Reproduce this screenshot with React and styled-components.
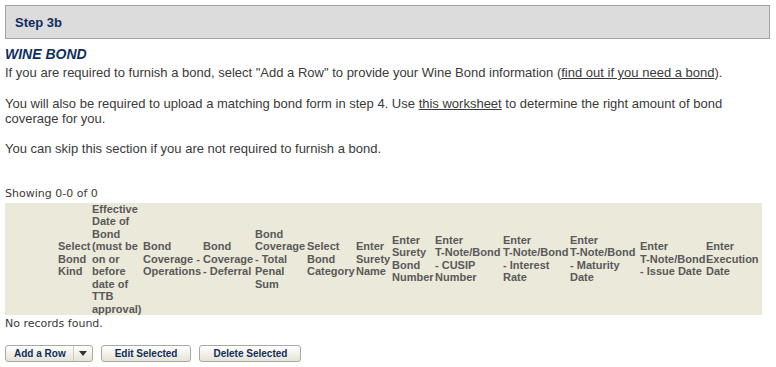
import React from "react";
import styled, { createGlobalStyle } from "styled-components";

const GlobalStyle = createGlobalStyle`
  html, body {
    margin: 0;
    padding: 0;
    background: #ffffff;
  }
  body {
    font-family: "Liberation Sans", Arial, sans-serif;
    color: #333333;
  }
`;

const Page = styled.div`
  padding: 5px 6px 0 5px;
`;

const StepHeader = styled.div`
  box-sizing: border-box;
  height: 34px;
  border: 1px solid #a3a3a3;
  background: #dcdcdc;
  padding: 0 9px;
  display: flex;
  align-items: center;
  font: bold 13px "Liberation Sans", Arial, sans-serif;
  color: #0f2d5c;
`;

const Section = styled.section`
  margin-top: 7px;
`;

const SectionTitle = styled.h2`
  margin: 0 0 3px;
  font: italic bold 14px "Liberation Sans", Arial, sans-serif;
  color: #0f305f;
`;

const Text = styled.p`
  margin: 0 0 ${(p) => p.$mb ?? 16}px;
  font-size: 13px;
  color: #3a3a3a;
`;

const Link = styled.a`
  color: inherit;
  text-decoration: underline;
`;

const Status = styled.div`
  font-family: "DejaVu Sans", Verdana, sans-serif;
  font-size: 11px;
  color: #3a3a3a;
  margin-top: ${(p) => p.$mt ?? 0}px;
`;

const Grid = styled.table`
  width: 757px;
  table-layout: fixed;
  border-collapse: collapse;
  margin-top: 3px;
`;

const HeadRow = styled.tr`
  background: #ebe9d9;
`;

const HeadCell = styled.th`
  box-sizing: border-box;
  width: ${(p) => p.$w}px;
  padding: 0 1px;
  font: bold 11px "Liberation Sans", Arial, sans-serif;
  line-height: 12.5px;
  color: #595959;
  text-align: left;
  vertical-align: middle;
`;

const NoBreak = styled.span`
  white-space: nowrap;
`;

const ButtonBar = styled.div`
  display: flex;
  gap: 8px;
  margin-top: 14.5px;
`;

const buttonFace = `
  box-sizing: border-box;
  height: 17px;
  border: 1px solid #a8a8a8;
  border-radius: 3px;
  background: linear-gradient(#ffffff, #e6e3d4);
  font: bold 10px "Liberation Sans", Arial, sans-serif;
  color: #0f2d5c;
  white-space: nowrap;
`;

const Button = styled.button`
  ${buttonFace}
  padding: 0 ${(p) => p.$px ?? 14}px;
  cursor: pointer;
`;

const SplitButton = styled.div`
  ${buttonFace}
  display: flex;
  align-items: stretch;
  padding: 0;
`;

const SplitMain = styled.button`
  box-sizing: border-box;
  border: none;
  background: transparent;
  font: inherit;
  color: inherit;
  padding: 0 7px 0 8px;
  white-space: nowrap;
  cursor: pointer;
`;

const SplitArrow = styled.button`
  box-sizing: border-box;
  border: none;
  border-left: 1px solid #cfcdc2;
  background: transparent;
  width: 19px;
  padding: 0;
  display: flex;
  align-items: center;
  justify-content: center;
  cursor: pointer;
`;

const TN = () => <NoBreak>T-Note/Bond</NoBreak>;

const columns = [
  { w: 52, label: "" },
  { w: 34, label: "Select Bond Kind" },
  { w: 51, label: "Effective Date of Bond (must be on or before date of TTB approval)" },
  { w: 60, label: "Bond Coverage - Operations" },
  { w: 52, label: "Bond Coverage - Deferral" },
  { w: 52, label: "Bond Coverage - Total Penal Sum" },
  { w: 49, label: "Select Bond Category" },
  { w: 36, label: "Enter Surety Name" },
  { w: 43, label: "Enter Surety Bond Number" },
  { w: 68, label: <>Enter <TN /> - CUSIP Number</> },
  { w: 67, label: <>Enter <TN /> - Interest Rate</> },
  { w: 70, label: <>Enter <TN /> - Maturity Date</> },
  { w: 66, label: <>Enter <TN /> - Issue Date</> },
  { w: 57, label: "Enter Execution Date" },
];

export default function App() {
  return (
    <>
      <GlobalStyle />
      <Page>
        <StepHeader>Step 3b</StepHeader>
        <Section>
          <SectionTitle>WINE BOND</SectionTitle>
          <Text>
            If you are required to furnish a bond, select "Add a Row" to provide your Wine Bond
            information (<Link href="#">find out if you need a bond</Link>).
          </Text>
          <Text $mb={15}>
            You will also be required to upload a matching bond form in step 4. Use{" "}
            <Link href="#">this worksheet</Link> to determine the right amount of bond coverage
            for you.
          </Text>
          <Text $mb={0}>You can skip this section if you are not required to furnish a bond.</Text>

          <Status $mt={30.5}>Showing 0-0 of 0</Status>
          <Grid>
            <thead>
              <HeadRow>
                {columns.map((c, i) => (
                  <HeadCell key={i} $w={c.w}>
                    {c.label}
                  </HeadCell>
                ))}
              </HeadRow>
            </thead>
          </Grid>
          <Status $mt={2}>No records found.</Status>

          <ButtonBar>
            <SplitButton>
              <SplitMain>Add a Row</SplitMain>
              <SplitArrow aria-label="More">
                <svg width="8" height="5" viewBox="0 0 8 5">
                  <path d="M0 0 H8 L4 5 Z" fill="#333" />
                </svg>
              </SplitArrow>
            </SplitButton>
            <Button $px={13}>Edit Selected</Button>
            <Button $px={13}>Delete Selected</Button>
          </ButtonBar>
        </Section>
      </Page>
    </>
  );
}
